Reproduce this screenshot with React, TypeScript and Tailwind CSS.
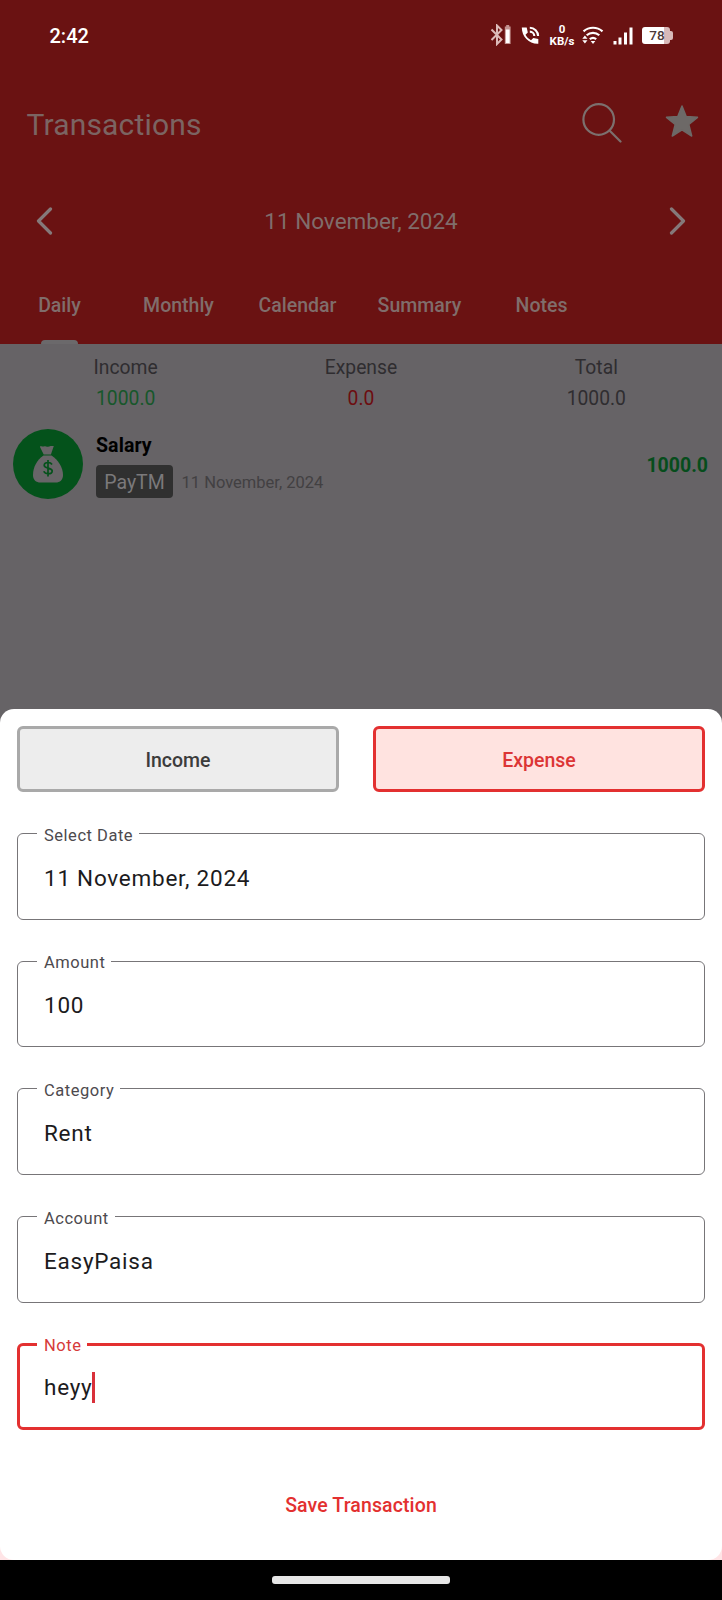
import React from "react";

function StatusBar() {
  return (
    <div className="flex h-[70px] items-center pl-[49.500px] pr-[49px] text-white">
      <span className="pt-[2px] text-[20px] font-medium leading-6">2:42</span>
      <div className="ml-auto flex h-6 items-center">
        <svg width="22" height="22" viewBox="0 0 22 22" className="mr-[9px]">
          <path d="M1.500 5.500l10 10-4.500 4.500V1.500l4.500 4.500L1.500 16" fill="none" stroke="#dcbab8" strokeWidth="2" />
          <rect x="14.800" y="2.500" width="5.800" height="17.500" fill="#c39391" />
          <rect x="16.200" y="1" width="3" height="2" fill="#c39391" />
          <rect x="15.800" y="5.500" width="3.800" height="13.500" fill="#fff" />
        </svg>
        <svg width="19" height="19" viewBox="0 0 19 19" className="mr-[9px]">
          <path d="M.8 1.500h4.900l1.100 5-2.300 2.200c1.400 2.500 3 4 5.500 5.500l2.300-2.300 5 1.100v4.800C8.500 18.300.8 11 .8 1.500z" fill="#fff" />
          <path d="M8.800 1.800a8.300 8.300 0 0 1 8.300 8.300M8.800 5.600A4.500 4.500 0 0 1 13.300 10.100" fill="none" stroke="#fff" strokeWidth="2.100" />
        </svg>
        <div className="mr-[7px] flex w-[26px] flex-col items-center text-[11.500px] font-bold leading-[12px]">
          <span>0</span>
          <span className="whitespace-nowrap">KB/s</span>
        </div>
        <svg width="22" height="20" viewBox="0 0 22 20" className="mr-[9px]">
          <g fill="none" stroke="#fff" strokeWidth="2.200">
            <path d="M1.500 6.300a14.500 14.500 0 0 1 19 0" />
            <path d="M4.700 10.300a9.500 9.500 0 0 1 12.600 0" />
            <path d="M7.800 14.200a5 5 0 0 1 6.400 0" />
          </g>
          <path d="M8.700 16h4.600L11 19z" fill="#fff" />
          <path d="M.3 13.800L2.900 10.500l2.600 3.300zM.3 15.200h5.200L2.900 18.500z" fill="#fff" />
        </svg>
        <svg width="20" height="19" viewBox="0 0 20 19" className="mr-[9px]">
          <path d="M.5 15h3v3.500h-3zM5.500 11.500h3v7h-3zM11 6.500h3v12h-3zM16.500 1.500h3v17h-3z" fill="#fff" />
        </svg>
        <div className="flex items-center pt-px">
          <div className="flex h-[17px] w-[28px] items-center justify-center rounded-[3px] bg-linear-to-r from-white from-78% to-[#d8b9b9] to-78% pl-[2px] pt-px text-[13.500px] font-medium leading-none text-[#4a3838]">
            78
          </div>
          <div className="h-[9px] w-[3px] rounded-r-[2px] bg-[#d8b9b9]" />
        </div>
      </div>
    </div>
  );
}

const tabs = [
  { name: "Daily", box: "w-[43px]" },
  { name: "Monthly", box: "ml-[62px] w-[71px]" },
  { name: "Calendar", box: "ml-[44px] w-[79px]" },
  { name: "Summary", box: "ml-[40px] w-[85px]" },
  { name: "Notes", box: "ml-[53px] w-[53px]" },
];

function Header() {
  return (
    <header className="h-[344px] bg-[#6a1212]">
      <StatusBar />
      <div className="flex h-[106px] items-center pl-[26.500px] pr-[23px]">
        <h1 className="pt-[3px] text-[30px] leading-9 tracking-[0.17px] text-[#7b6462]">Transactions</h1>
        <svg width="40" height="40" viewBox="0 0 40 40" className="mb-px ml-auto mr-[43px]" fill="none" stroke="#7c706e" strokeWidth="2.200" strokeLinecap="round">
          <circle cx="16.700" cy="16.500" r="15.300" />
          <path d="M27.500 27.500L38.500 38.500" />
        </svg>
        <svg width="34" height="34" viewBox="0 0 34 34" className="mb-[4px]">
          <path d="M17 2l4.200 10.600 11.300.7-8.700 7.200 2.900 11.500L17 25.800 7.300 32l2.900-11.500-8.700-7.200 11.300-.7z" fill="#6d6967" stroke="#6d6967" strokeWidth="1.500" strokeLinejoin="round" />
        </svg>
      </div>
      <div className="flex h-[90px] items-center justify-between pl-[36px] pr-[36px]">
        <svg width="17" height="28" viewBox="0 0 17 28" fill="none" stroke="#85797a" strokeWidth="3.200" strokeLinecap="round" strokeLinejoin="round">
          <path d="M14.500 2L2.500 14l12 12" />
        </svg>
        <span className="text-[22.500px] leading-7 text-[#806d6b]">11 November, 2024</span>
        <svg width="17" height="28" viewBox="0 0 17 28" fill="none" stroke="#85797a" strokeWidth="3.200" strokeLinecap="round" strokeLinejoin="round">
          <path d="M2.500 2l12 12-12 12" />
        </svg>
      </div>
      <nav className="flex h-[78px] pl-[38px] pt-[28px]">
        {tabs.map((t) => (
          <div key={t.name} className={t.box + " flex h-full flex-col items-center justify-between"}>
            <span className="whitespace-nowrap text-[19.500px] font-medium leading-6 text-[#806d6b]">{t.name}</span>
            {t.name === "Daily" && <div className="h-1 w-[37px] rounded-t-[4px] bg-[#6b696b]" />}
          </div>
        ))}
      </nav>
    </header>
  );
}

function Total({ label, value, tone }: { label: string; value: string; tone: string }) {
  return (
    <div className="flex flex-1 flex-col items-center text-[19.300px] leading-[30.500px]">
      <span className="text-[#2f2d30]">{label}</span>
      <span className={tone}>{value}</span>
    </div>
  );
}

function MoneyBag() {
  return (
    <div className="flex size-[70px] items-center justify-center rounded-full bg-[#04521b]">
      <svg width="32" height="38" viewBox="0 0 32 38">
        <path d="M8.500 1c2 1.200 3.500-.4 5.500.4 1.700.7 3 .5 4.500-.3 1.200-.5 2.200.3 3.300-.2l-2.900 8.500h-7.200L8 2z" fill="#686568" />
        <path d="M11.500 10.500h8C26 15 31 22 31 30c0 5-3 7.500-7.500 7.500h-15C4 37.500 1 35 1 30c0-8 4-15 10.500-19.500z" fill="#686568" />
        <path d="M20 19.500c-.7-1.300-2-2-4-2-2.300 0-3.800 1-3.800 2.700 0 3.900 8 1.900 8 5.700 0 1.800-1.700 2.800-4 2.800-2.200 0-3.700-.8-4.400-2.500M16 15v16.500" fill="none" stroke="#04521b" strokeWidth="1.700" />
      </svg>
    </div>
  );
}

function Field({ label, value, active = false }: { label: string; value: string; active?: boolean }) {
  return (
    <fieldset className={(active ? "border-[3px] border-[#e33030] pl-[17px]" : "border-[1.500px] border-[#777578] pl-[19px]") + " h-[98px] rounded-[6px]"}>
      <legend className={(active ? "text-[#d63a3a]" : "text-[#4d4a4e]") + " pl-[7px] pr-[6px] pt-[4px] text-[16.500px] leading-5 tracking-[0.52px]"}>
        {label}
      </legend>
      <div className={(active ? "pt-[16px]" : "pt-[17px]") + " flex items-center pl-[7px] text-[22.500px] leading-[31px] tracking-[0.75px] text-[#1c1b1d]"}>
        {value}
        {active && <span className="-ml-[0.500px] h-[31px] w-[3px] bg-[#d9303a]" />}
      </div>
    </fieldset>
  );
}

export default function App() {
  return (
    <div className="flex h-[1600px] w-[722px] flex-col overflow-hidden bg-[#666366] font-['Roboto',sans-serif]">
      <Header />
      <main className="h-[365px] shrink-0">
        <div className="flex pl-[8px] pr-[8px] pt-[9px]">
          <Total label="Income" value="1000.0" tone="text-[#17572b]" />
          <Total label="Expense" value="0.0" tone="text-[#6d0d10]" />
          <Total label="Total" value="1000.0" tone="text-[#2f2d30]" />
        </div>
        <div className="flex items-center pl-[13px] pr-[14px] pt-[15px]">
          <MoneyBag />
          <div className="ml-[13px] flex flex-col pt-[3px]">
            <span className="text-[19.500px] font-bold leading-6 tracking-[0.1px] text-black">Salary</span>
            <div className="mt-[7px] flex items-center">
              <span className="flex h-[33px] w-[77px] items-center justify-center rounded-[4px] bg-[#303030] pt-[3px] text-[19.500px] text-[#7b797b]">PayTM</span>
              <span className="ml-[8.500px] pt-[4px] text-[16.500px] text-[#424042]">11 November, 2024</span>
            </div>
          </div>
          <span className="ml-auto pt-[4px] text-[19.500px] font-bold text-[#064d1c]">1000.0</span>
        </div>
      </main>
      <div className="h-[851px] shrink-0 bg-linear-to-b from-[#666366] from-50% to-[#ffe4e6] to-50%">
        <section className="flex h-full flex-col rounded-[14px] bg-white px-[17px] pt-[17px]">
          <div className="flex h-[66px] shrink-0 justify-between text-[19.500px] font-medium">
            <button className="w-[322px] rounded-[6px] border-[3px] border-[#a9a9a9] bg-[#ededed] pt-[3px] text-[#3c3c3c]">Income</button>
            <button className="w-[332px] rounded-[6px] border-[3px] border-[#e33030] bg-[#ffe3e0] pt-[3px] text-[#dc3535]">Expense</button>
          </div>
          <div className="mt-[29.500px] flex flex-col gap-[29.700px]">
            <Field label="Select Date" value="11 November, 2024" />
            <Field label="Amount" value="100" />
            <Field label="Category" value="Rent" />
            <Field label="Account" value="EasyPaisa" />
            <Field label="Note" value="heyy" active />
          </div>
          <button className="mt-[63.500px] self-center text-[19.500px] font-medium leading-6 tracking-[0.12px] text-[#e33030]">Save Transaction</button>
        </section>
      </div>
      <footer className="flex h-10 shrink-0 justify-center bg-black pt-4">
        <div className="h-2 w-[178px] rounded-[3px] bg-[#e6e6e6]" />
      </footer>
    </div>
  );
}
